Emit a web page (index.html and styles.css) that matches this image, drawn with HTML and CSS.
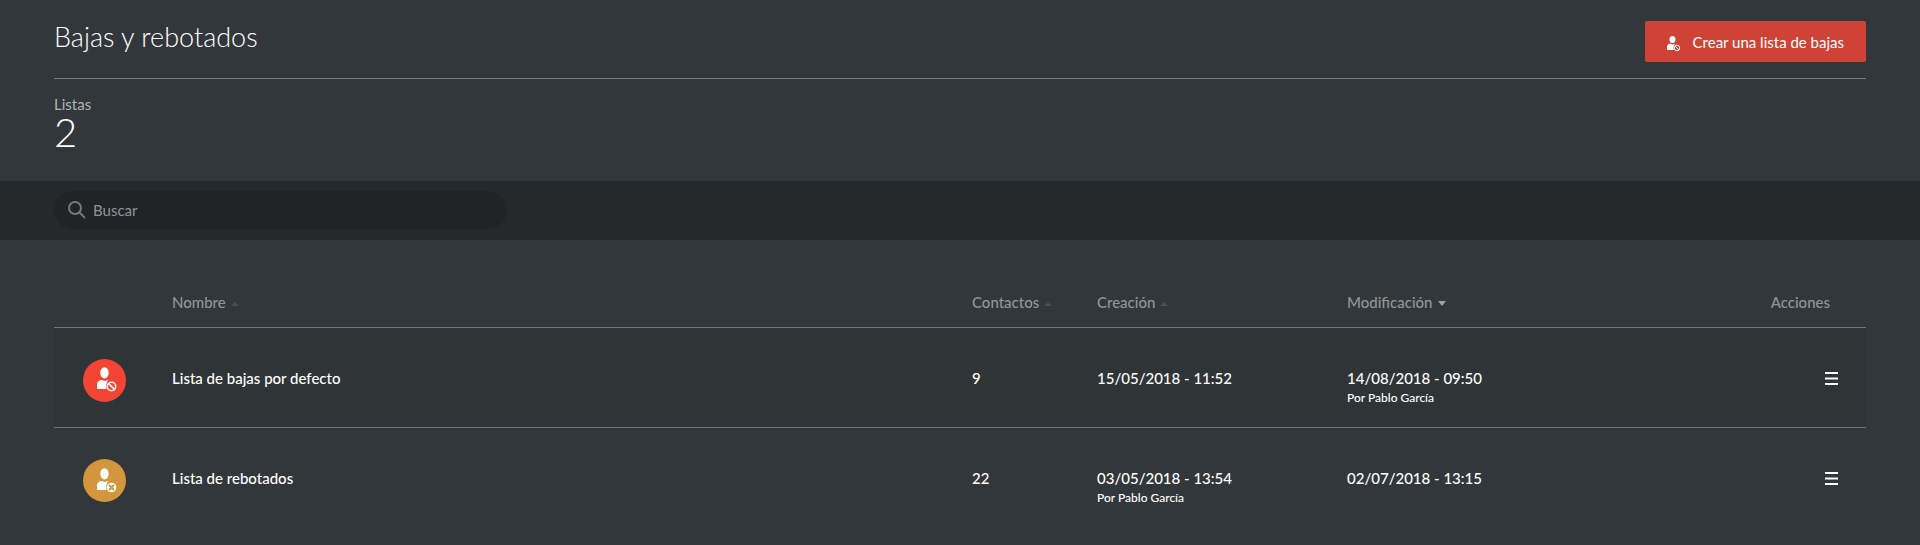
FILE: index.html
```html
<!DOCTYPE html>
<html lang="es">
<head>
  <meta charset="UTF-8" />
  <meta name="viewport" content="width=device-width, initial-scale=1.0" />
  <title>Bajas y rebotados</title>
  <link rel="stylesheet" href="styles.css">
</head>
<body>
  <header class="page-header">
    <div class="page-top">
      <h1 class="page-title">Bajas y rebotados</h1>
      <button type="button" class="btn-create">
        <svg class="btn-icon" viewBox="0 0 14 16" aria-hidden="true">
          <ellipse cx="5.500" cy="3.500" rx="3" ry="3.500" />
          <path d="M0 14v-3c0-2 1.500-3.500 3.500-3.500l2 1 2.500-.5c-1.500 1.500-2 4-1 6z" />
          <circle class="badge-ring" cx="10" cy="12" r="2.800" />
          <path class="badge-ring" d="M8 10l4 4" />
        </svg>
        Crear una lista de bajas
      </button>
    </div>
    <div class="stats">
      <div class="stats-label">Listas</div>
      <div class="stats-value">2</div>
    </div>
  </header>

  <form class="search-bar" role="search">
    <div class="search-box">
      <svg class="search-icon" viewBox="0 0 18 18" aria-hidden="true">
        <circle cx="7" cy="7" r="6" />
        <path d="M11 11l6 6" />
      </svg>
      <input type="text" class="search-input" placeholder="Buscar" aria-label="Buscar">
    </div>
  </form>

  <main class="lists">
    <table class="lists-table">
      <thead>
        <tr>
          <th class="col-icon"></th>
          <th class="col-name">Nombre<span class="sort sort-up"></span></th>
          <th class="col-contacts">Contactos<span class="sort sort-up"></span></th>
          <th class="col-created">Creación<span class="sort sort-up"></span></th>
          <th class="col-modified">Modificación<span class="sort sort-down"></span></th>
          <th class="col-actions">Acciones</th>
        </tr>
      </thead>
      <tbody>
        <tr>
          <td class="col-icon">
            <svg class="list-icon list-icon-red" viewBox="0 0 43 43" aria-hidden="true">
              <circle class="disc" cx="21.5" cy="21.5" r="21.5" />
              <ellipse cx="21.500" cy="13.800" rx="4.200" ry="5.600" />
              <path d="M14 30v-4c0-3 2-5 5-5l2.500 1 4-1c-2 2-3 6-2 9z" />
              <circle class="badge-ring" cx="28.500" cy="27.500" r="4.200" />
              <path class="badge-ring" d="M25.600 24.600l5.800 5.800" />
            </svg>
          </td>
          <td>Lista de bajas por defecto</td>
          <td>9</td>
          <td>15/05/2018 - 11:52</td>
          <td>14/08/2018 - 09:50<div class="author">Por Pablo García</div></td>
          <td class="col-actions">
            <button type="button" class="btn-menu" aria-label="Acciones">
              <svg viewBox="0 0 13 13" aria-hidden="true"><path d="M0 1h13M0 6.500h13M0 12h13" /></svg>
            </button>
          </td>
        </tr>
        <tr>
          <td class="col-icon">
            <svg class="list-icon list-icon-orange" viewBox="0 0 43 43" aria-hidden="true">
              <circle class="disc" cx="21.5" cy="21.5" r="21.5" />
              <ellipse cx="21.500" cy="14.800" rx="4.200" ry="5.600" />
              <path d="M14 31v-4c0-3 2-5 5-5l2.500 1 4-1c-2 2-3 6-2 9z" />
              <circle cx="28.500" cy="28.500" r="4.800" />
              <path class="badge-cross" d="M26 26l5 5m0-5l-5 5" />
            </svg>
          </td>
          <td>Lista de rebotados</td>
          <td>22</td>
          <td>03/05/2018 - 13:54<div class="author">Por Pablo García</div></td>
          <td>02/07/2018 - 13:15</td>
          <td class="col-actions">
            <button type="button" class="btn-menu" aria-label="Acciones">
              <svg viewBox="0 0 13 13" aria-hidden="true"><path d="M0 1h13M0 6.500h13M0 12h13" /></svg>
            </button>
          </td>
        </tr>
      </tbody>
    </table>
  </main>
</body>
</html>
```
FILE: styles.css
```css
* {
  box-sizing: border-box;
}

body {
  margin: 0;
  background-color: #32373b;
  color: #fff;
  font-family: Lato, sans-serif;
  font-size: 15px;
  line-height: 20px;
}

button,
input {
  font: inherit;
}

/* Header */

.page-header {
  padding: 0 54px;
}

.page-top {
  display: flex;
  justify-content: space-between;
  align-items: flex-start;
  padding: 21px 0 16px;
  border-bottom: 1px solid #757a7c;
}

.page-title {
  margin: 0;
  font-size: 27px;
  font-weight: 300;
  line-height: 32px;
}

.btn-create {
  display: flex;
  align-items: center;
  height: 41px;
  padding: 0 22px;
  border: 0;
  border-radius: 2px;
  background-color: #cf4236;
  color: #fff;
}

.btn-icon {
  width: 14px;
  height: 16px;
  margin: 4px 12px 0 0;
  fill: #fff;
}

.badge-ring {
  fill: none;
  stroke: #fff;
  stroke-width: 1.5;
}

.btn-icon .badge-ring {
  fill: #cf4236;
  stroke-width: 1;
}

.stats {
  padding: 15px 0 31px;
}

.stats-label {
  color: #b0b3b4;
}

.stats-value {
  font-size: 40px;
  font-weight: 300;
  line-height: 36px;
}

/* Search */

.search-bar {
  padding: 10px 54px 11px;
  background-color: #26292c;
}

.search-box {
  display: flex;
  align-items: center;
  width: 25%;
  height: 38px;
  padding: 0 14px;
  border-radius: 19px;
  background-color: #212427;
}

.search-icon {
  flex: none;
  width: 18px;
  height: 18px;
  fill: none;
  stroke: #777;
  stroke-width: 2;
}

.search-input {
  flex: 1;
  min-width: 0;
  padding: 0 7px;
  border: 0;
  outline: 0;
  background: none;
  color: #fff;
}

.search-input::placeholder {
  color: #919394;
  opacity: 1;
}

/* Table */

.lists {
  padding: 43px 54px 16px;
}

.lists-table {
  width: 100%;
  border-collapse: collapse;
  table-layout: fixed;
  font-weight: 500;
}

.lists-table th {
  height: 40px;
  padding: 7px 0 13px;
  color: #919597;
  font-weight: 500;
  text-align: left;
}

.lists-table td {
  height: 100px;
  padding: 40px 0 0;
  border-top: 1px solid #6f7678;
  vertical-align: top;
}

.lists-table tbody tr:nth-child(odd) {
  background-color: #2f3437;
}

.lists-table .col-icon {
  width: 118px;
  padding-top: 31px;
  padding-left: 29px;
}

.col-contacts {
  width: 125px;
}

.col-created {
  width: 250px;
}

.col-modified {
  width: 400px;
}

.lists-table .col-actions {
  width: 119px;
  padding-right: 28px;
  text-align: right;
}

.lists-table th.col-actions {
  padding-right: 36px;
}

.author {
  font-size: 12px;
}

.sort {
  display: inline-block;
  margin-bottom: 2px;
  margin-left: 5px;
  border: 4px solid transparent;
}

.sort-up {
  border-top: 0;
  border-bottom-color: #484e51;
}

.sort-down {
  border-bottom: 0;
  border-top-width: 5px;
  border-top-color: #a0a3a5;
}

.list-icon {
  display: block;
  width: 43px;
  height: 43px;
  fill: #fff;
}

.list-icon-red .disc {
  fill: #f44434;
}

.list-icon-orange .disc {
  fill: #d3963f;
}

.badge-cross {
  stroke: #d3963f;
  stroke-width: 2;
}

.btn-menu {
  padding: 0;
  border: 0;
  background: none;
}

.btn-menu svg {
  display: block;
  width: 13px;
  height: 13px;
  margin: 4px 0;
  stroke: #fff;
  stroke-width: 2;
}
```
